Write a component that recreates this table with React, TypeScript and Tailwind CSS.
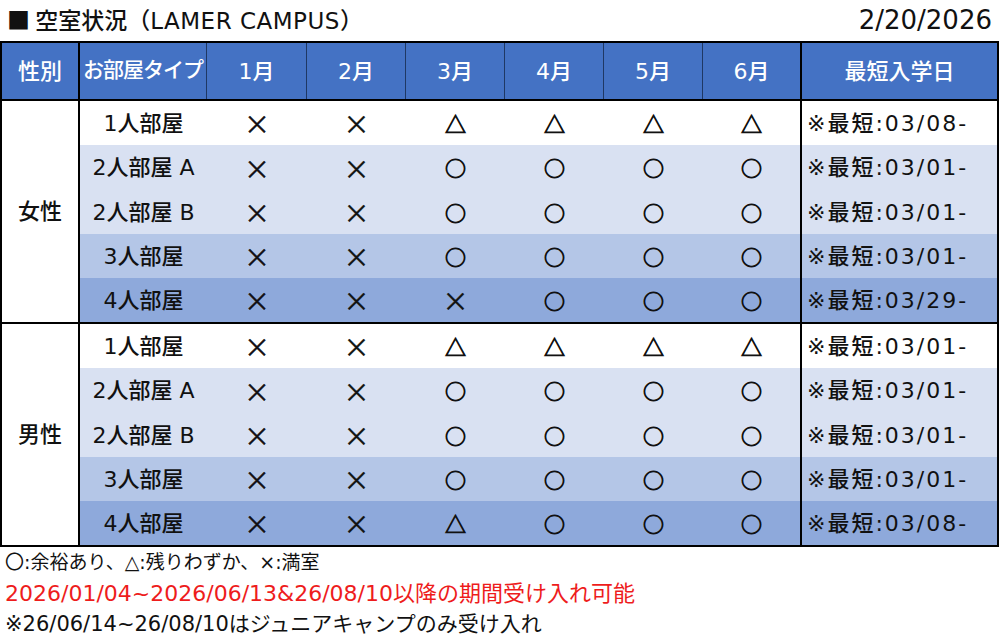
const rowBg = ["bg-white", "bg-[#d9e1f2]", "bg-[#d9e1f2]", "bg-[#b4c6e7]", "bg-[#8ea9db]"];
const rowH = ["h-[44px]", "h-[45px]", "h-[44px]", "h-[44px]", "h-[44px]"];
const monthW = ["w-[100px]", "w-[99px]", "w-[99px]", "w-[99px]", "w-[99px]"];

type Room = { name: string; marks: string[]; earliest: string };

const female: Room[] = [
  { name: "1人部屋", marks: ["×", "×", "△", "△", "△", "△"], earliest: "03/08-" },
  { name: "2人部屋 A", marks: ["×", "×", "○", "○", "○", "○"], earliest: "03/01-" },
  { name: "2人部屋 B", marks: ["×", "×", "○", "○", "○", "○"], earliest: "03/01-" },
  { name: "3人部屋", marks: ["×", "×", "○", "○", "○", "○"], earliest: "03/01-" },
  { name: "4人部屋", marks: ["×", "×", "×", "○", "○", "○"], earliest: "03/29-" },
];

const male: Room[] = [
  { name: "1人部屋", marks: ["×", "×", "△", "△", "△", "△"], earliest: "03/01-" },
  { name: "2人部屋 A", marks: ["×", "×", "○", "○", "○", "○"], earliest: "03/01-" },
  { name: "2人部屋 B", marks: ["×", "×", "○", "○", "○", "○"], earliest: "03/01-" },
  { name: "3人部屋", marks: ["×", "×", "○", "○", "○", "○"], earliest: "03/01-" },
  { name: "4人部屋", marks: ["×", "×", "△", "○", "○", "○"], earliest: "03/08-" },
];

// symbols come from the CJK font so they get the full-width shapes
function Mark({ m }: { m: string }) {
  const cls = "font-['Noto_Sans_CJK_JP',sans-serif] leading-none";
  if (m === "×") return <span className={`${cls} text-[26px] [-webkit-text-stroke:0.4px_#111]`}>×</span>;
  if (m === "△") return <span className={`${cls} text-[21px] [-webkit-text-stroke:0.9px_#111]`}>△</span>;
  return <span className={`${cls} text-[21px] [-webkit-text-stroke:0.9px_#111]`}>○</span>;
}

function Group({ label, rooms, last }: { label: string; rooms: Room[]; last?: boolean }) {
  return (
    <div className={`flex ${last ? "" : "border-b-2 border-black"}`}>
      <div className="w-[78px] shrink-0 border-r-2 border-black bg-white flex items-center justify-center text-[22px] font-medium">
        {label}
      </div>
      <div className="flex-1 flex flex-col">
        {rooms.map((r, i) => (
          <div key={i} className={`flex items-center ${rowH[i]} ${rowBg[i]}`}>
            <div className="w-[127px] shrink-0 text-center text-[22px] font-medium">{r.name}</div>
            {r.marks.slice(0, 5).map((m, j) => (
              <div key={j} className={`${monthW[j]} shrink-0 flex justify-center`}>
                <Mark m={m} />
              </div>
            ))}
            <div className="w-[99px] h-full shrink-0 border-r-2 border-black flex items-center justify-center">
              <Mark m={r.marks[5]} />
            </div>
            <div className="flex-1 pl-[5px] text-[22px] font-medium tracking-[2px]">※最短:{r.earliest}</div>
          </div>
        ))}
      </div>
    </div>
  );
}

export default function App() {
  return (
    <div className="w-[1000px] h-[643px] bg-white text-[#111] font-['DejaVu_Sans','Noto_Sans_CJK_JP',sans-serif]">
      <div className="h-[41px] flex items-center justify-between pl-[7px] pr-[8px]">
        <div className="text-[23px] font-medium font-['Noto_Sans_CJK_JP',sans-serif]">
          ■ 空室状況（<span className="font-['DejaVu_Sans',sans-serif] text-[23px] tracking-[0.5px]">LAMER CAMPUS</span>）
        </div>
        <div className="text-[26px]">2/20/2026</div>
      </div>

      <div className="w-[999px] border-2 border-black">
        <div className="flex h-[58px] bg-[#4472c4] border-b-2 border-black text-white text-[22px] font-medium">
          <div className="w-[78px] shrink-0 border-r-2 border-black flex items-center justify-center">性別</div>
          <div className="w-[127px] shrink-0 border-r border-[#1f3864] flex items-center justify-center text-[21px] tracking-[-1px]">
            お部屋タイプ
          </div>
          {["1月", "2月", "3月", "4月", "5月"].map((m, j) => (
            <div key={m} className={`${monthW[j]} shrink-0 border-r border-[#1f3864] flex items-center justify-center`}>
              {m}
            </div>
          ))}
          <div className="w-[99px] shrink-0 border-r-2 border-black flex items-center justify-center">6月</div>
          <div className="flex-1 flex items-center justify-center">最短入学日</div>
        </div>
        <Group label="女性" rooms={female} />
        <Group label="男性" rooms={male} last />
      </div>

      <div className="pl-[5px]">
        <div className="h-[30px] flex items-center text-[19px]">〇:余裕あり、△:残りわずか、×:満室</div>
        <div className="h-[32px] flex items-center text-[22px] text-[#ee1c1c]">
          2026/01/04~2026/06/13&amp;26/08/10以降の期間受け入れ可能
        </div>
        <div className="h-[32px] flex items-center text-[21px]">※26/06/14~26/08/10はジュニアキャンプのみ受け入れ</div>
      </div>
    </div>
  );
}
